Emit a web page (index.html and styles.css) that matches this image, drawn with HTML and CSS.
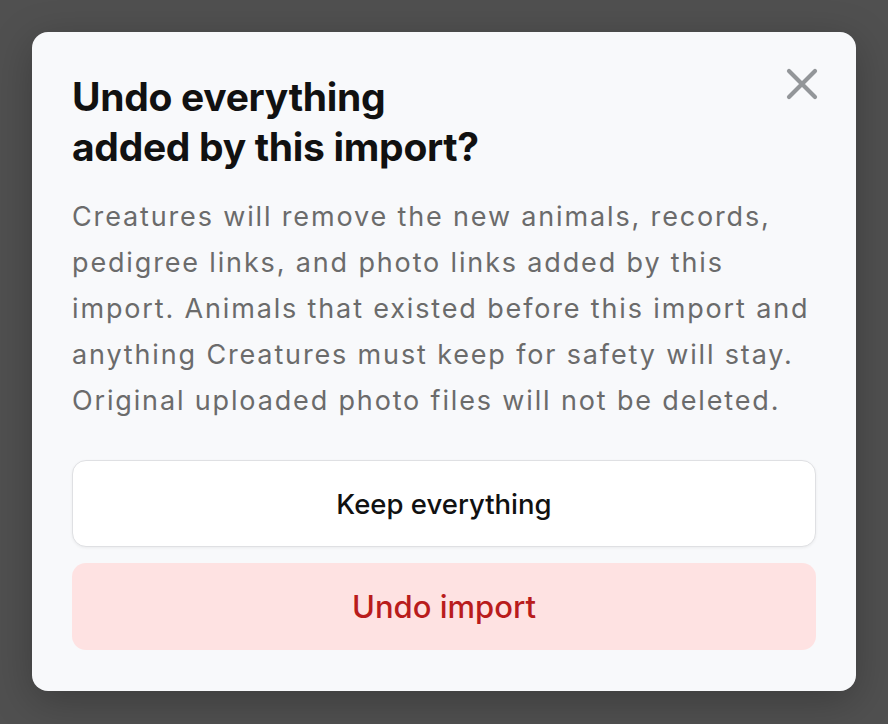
FILE: index.html
```html
<!DOCTYPE html>
<html lang="en">
<head>
    <meta charset="UTF-8">
    <meta name="viewport" content="width=device-width, initial-scale=1.0">
    <title>Undo import</title>
    <link rel="stylesheet" href="styles.css">
</head>
<body>

    <div class="dialog">
        <button class="close" aria-label="Close">
            <svg width="32" height="32" viewBox="0 0 32 32">
                <path d="M3 3 L29 29 M29 3 L3 29" stroke="#939699" stroke-width="4.2" stroke-linecap="round" fill="none"/>
            </svg>
        </button>

        <h2 class="title">Undo everything<br>added by this import?</h2>

        <p class="text">Creatures will remove the new animals, records, pedigree links, and photo links added by this import. Animals that existed before this import and anything Creatures must keep for safety will stay. Original uploaded photo files will not be deleted.</p>

        <div class="actions">
            <button class="btn keep">Keep everything</button>
            <button class="btn undo">Undo import</button>
        </div>
    </div>

</body>
</html>
```

FILE: styles.css
```css
body, html {
    margin: 0;
    padding: 0;
    height: 100%;
    overflow: hidden;
    background-color: #505050;
    font-family: Inter, "Noto Sans", sans-serif;
}

body {
    padding: 32px;
    box-sizing: border-box;
}

.dialog {
    position: relative;
    background: #f8f9fb;
    border-radius: 16px;
    padding: 40px 40px 41px;
    box-shadow: 0 10px 40px rgba(0, 0, 0, 0.25);
}

.close {
    position: absolute;
    top: 36px;
    right: 38px;
    width: 32px;
    height: 32px;
    padding: 0;
    border: 0;
    background: none;
    display: flex;
}

.title {
    margin: 0;
    font-size: 39px;
    line-height: 50px;
    font-weight: 700;
    color: #111;
    letter-spacing: -0.3px;
}

.text {
    margin: 22px 0 0;
    font-size: 27px;
    line-height: 46px;
    letter-spacing: 1.85px;
    color: #6b6b6b;
}

.actions {
    display: flex;
    flex-direction: column;
    gap: 16px;
    margin-top: 36px;
}

.btn {
    height: 87px;
    border-radius: 14px;
    font-family: inherit;
    font-weight: 500;
}

.keep {
    background: #fff;
    border: 1.5px solid #dfe0e3;
    box-shadow: 0 1px 3px rgba(0, 0, 0, 0.06);
    color: #111;
    font-size: 27.5px;
}

.undo {
    background: #fee2e2;
    border: 0;
    color: #b91c1c;
    font-size: 31px;
}
```
